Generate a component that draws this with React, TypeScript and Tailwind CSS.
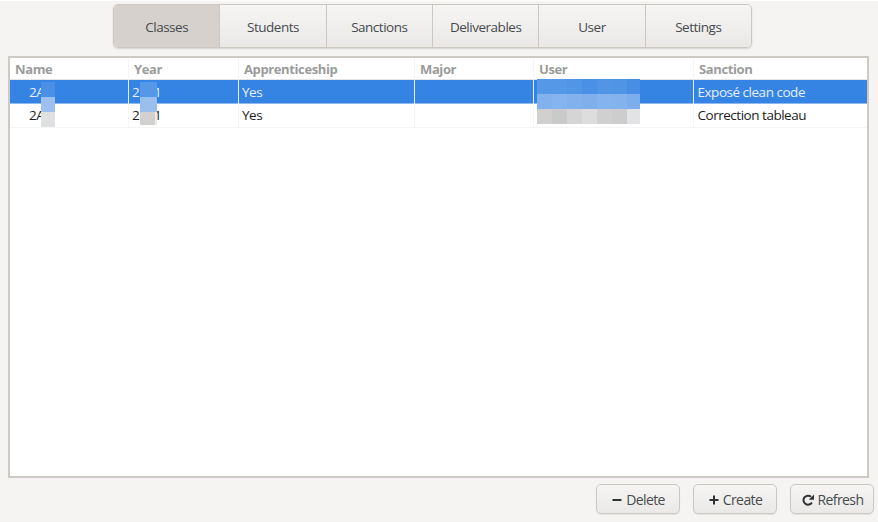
import React from "react";

const tabs = ["Classes", "Students", "Sanctions", "Deliverables", "User", "Settings"];
const columns = ["Name", "Year", "Apprenticeship", "Major", "User", "Sanction"];
const grid = "grid grid-cols-[119px_110px_176px_119px_160px_1fr]";

const userMosaic = [
  ["bg-[#5698e8]", "bg-[#5698e8]", "bg-[#5195e6]", "bg-[#4a90e6]", "bg-[#5294e6]", "bg-[#5094e6]", "bg-[#488ee4]"],
  ["bg-[#82b1ed]", "bg-[#85b4ee]", "bg-[#82b1ed]", "bg-[#80afec]", "bg-[#85b3ee]", "bg-[#84b2ed]", "bg-[#7cadec]"],
  ["bg-[#d1d0cf]", "bg-[#c9cbca]", "bg-[#d5d5d5]", "bg-[#dddddd]", "bg-[#d0d0d0]", "bg-[#cdcdcd]", "bg-[#e1e3e5]"],
];

function Row({ selected, sanction }: { selected?: boolean; sanction: string }) {
  const cell = selected ? "border-r border-[#e4edf8]" : "border-r border-[#f5f5f5]";
  return (
    <div
      className={`${grid} h-6 border-b text-[13.5px] tracking-[-0.48px] ${
        selected
          ? "border-[#8fbaf0] bg-[#3584e4] leading-[24px] text-[#e6effb]"
          : "border-[#f5f5f5] bg-white leading-[23px] text-[#1c1c1c]"
      }`}
    >
      <div className={`${cell} pl-[19px]`}>2A</div>
      <div className={`${cell} flex pl-[3px]`}>
        <span className="w-[22px]">2</span>
        <span>1</span>
      </div>
      <div className={`${cell} pl-[3px]`}>Yes</div>
      <div className={cell} />
      <div className={cell} />
      <div className="pl-[3.5px] whitespace-nowrap">{sanction}</div>
    </div>
  );
}

function Action({ icon, label }: { icon: React.ReactNode; label: string }) {
  return (
    <button className="flex h-[30px] w-[84px] items-center justify-center gap-[4px] rounded-[5px] border border-[#cdc7c2] bg-linear-to-b from-[#f6f5f4] to-[#ebe9e8] pt-px pl-px text-[14px] leading-none tracking-[-0.6px] text-[#454b4d] shadow-[0_1px_1px_rgba(0,0,0,0.08)]">
      {icon}
      <span>{label}</span>
    </button>
  );
}

export default function App() {
  return (
    <div className="relative flex h-[522px] w-[878px] flex-col overflow-hidden border-t border-[#fdfdfd] bg-[#f5f4f2] font-['Open_Sans','Noto_Sans',sans-serif]">
      <nav className="mt-[3px] ml-[113px] flex h-[44px] w-[639px] shrink-0 overflow-hidden rounded-[5px] border border-[#cdc7c2] shadow-[0_1px_2px_rgba(0,0,0,0.14)]">
        {tabs.map((tab, i) => (
          <button
            key={tab}
            className={`flex flex-1 items-center justify-center pt-[2px] text-[13.5px] tracking-[-0.48px] text-[#454b4d] ${
              i === 0 ? "bg-[#d6d1cd]" : "bg-linear-to-b from-[#f6f5f4] to-[#ebe9e8]"
            } ${i < tabs.length - 1 ? "border-r border-[#cdc7c2]" : ""}`}
          >
            {tab}
          </button>
        ))}
      </nav>

      <main className="mt-[8px] ml-[8px] h-[422px] w-[861px] shrink-0 border-2 border-[#cdc9c3] bg-white">
        <div className={`${grid} h-[22px] border-b border-[#e4e4e4] text-[13px] leading-[22px] font-bold tracking-[-0.38px] text-[#9a9c9b]`}>
          {columns.map((name, i) => (
            <div key={name} className={`pl-[5px] ${i < 5 ? "border-r border-[#f5f5f5]" : ""}`}>
              {name}
            </div>
          ))}
        </div>
        <Row selected sanction="Exposé clean code" />
        <Row sanction="Correction tableau" />
      </main>

      <footer className="mt-[6px] mr-[4px] flex justify-end gap-[13px]">
        <Action
          label="Delete"
          icon={
            <svg width="10" height="10" viewBox="0 0 10 10">
              <path d="M.5 5h9" stroke="#2e3436" strokeWidth="2" />
            </svg>
          }
        />
        <Action
          label="Create"
          icon={
            <svg width="10" height="10" viewBox="0 0 10 10">
              <path d="M.5 5h9M5 .5v9" stroke="#2e3436" strokeWidth="2" />
            </svg>
          }
        />
        <Action
          label="Refresh"
          icon={
            <svg width="12" height="12" viewBox="0 0 12 12">
              <path d="M9.9 8.4A4.5 4.5 0 1 1 9 2.8" fill="none" stroke="#2e3436" strokeWidth="2" />
              <path d="M12 .5v5.2H6.8z" fill="#2e3436" />
            </svg>
          }
        />
      </footer>

      <div className="absolute top-[81px] left-[41px] w-[14px]">
        <div className="h-[15px] bg-[#4a90e6]" />
        <div className="h-[15px] bg-[#9dc0ee]" />
        <div className="h-[15px] bg-[#dfe0e2]" />
      </div>
      <div className="absolute top-[81px] left-[140px] w-[17px]">
        <div className="h-[15px] bg-[#5698e8]" />
        <div className="h-[15px] bg-[#9bbfec]" />
        <div className="flex h-[13px]">
          <div className="w-[15px] bg-[#d1d1d1]" />
          <div className="w-[2px] bg-[#efede2]" />
        </div>
      </div>
      <div className="absolute top-[78px] left-[537px] w-[103px]">
        {userMosaic.map((row, r) => (
          <div key={r} className="grid h-[15px] grid-cols-[repeat(6,15px)_13px]">
            {row.map((color, c) => (
              <div key={c} className={color} />
            ))}
          </div>
        ))}
      </div>
      <div className="absolute bottom-0 left-0 h-px w-full bg-[#f0efee]" />
    </div>
  );
}
